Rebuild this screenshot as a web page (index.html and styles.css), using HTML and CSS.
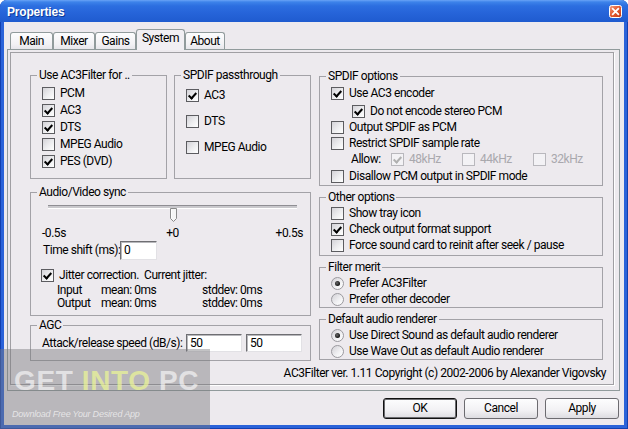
FILE: index.html
```html
<!DOCTYPE html>
<html>
<head>
<meta charset="utf-8">
<title>Properties</title>
<link rel="stylesheet" href="styles.css">
</head>
<body>
<div class="window">
  <div class="titlebar">
    <span class="title">Properties</span>
    <span class="close"><svg width="13" height="13" viewBox="0 0 13 13"><defs><linearGradient id="cg" x1="0" y1="0" x2="1" y2="1"><stop offset="0" stop-color="#f3a488"/><stop offset="0.45" stop-color="#e35d34"/><stop offset="1" stop-color="#c23812"/></linearGradient></defs><rect x="0.5" y="0.5" width="12" height="12" rx="2" fill="url(#cg)" stroke="#fff"/><path d="M3.8 3.8 L9.2 9.2 M9.2 3.8 L3.8 9.2" stroke="#fff" stroke-width="1.8" stroke-linecap="square"/></svg></span>
  </div>
  <div class="client">
    <div class="tabs">
      <div class="tab t-main">Main</div>
      <div class="tab t-mixer">Mixer</div>
      <div class="tab t-gains">Gains</div>
      <div class="tab t-system active">System</div>
      <div class="tab t-about">About</div>
    </div>
    <div class="panel">
      <div class="page">
        <div class="cols">
          <div class="col col-left">
            <div class="pair">
              <div class="group g-use">
                <div class="gtitle">Use AC3Filter for ..</div>
                <div class="list list-use">
                  <div class="opt"><span class="cb"></span><span>PCM</span></div>
                  <div class="opt"><span class="cb on"></span><span>AC3</span></div>
                  <div class="opt"><span class="cb on"></span><span>DTS</span></div>
                  <div class="opt"><span class="cb"></span><span>MPEG Audio</span></div>
                  <div class="opt"><span class="cb on"></span><span>PES (DVD)</span></div>
                </div>
              </div>
              <div class="group g-pass">
                <div class="gtitle">SPDIF passthrough</div>
                <div class="list list-pass">
                  <div class="opt"><span class="cb on"></span><span>AC3</span></div>
                  <div class="opt"><span class="cb"></span><span>DTS</span></div>
                  <div class="opt"><span class="cb"></span><span>MPEG Audio</span></div>
                </div>
              </div>
            </div>
            <div class="group g-av">
              <div class="gtitle">Audio/Video sync</div>
              <div class="slider">
                <div class="track"></div>
                <svg class="thumb" width="7" height="14" viewBox="0 0 7 14"><path d="M0.5 0.5H6.5V10.5L3.5 13.5L0.5 10.5Z" fill="#f6f6f6" stroke="#8a8a8a"/><path d="M1.5 1.5V10" stroke="#fff"/></svg>
              </div>
              <div class="scale"><span>-0.5s</span><span>+0</span><span class="r">+0.5s</span></div>
              <div class="shift"><span class="shift-label">Time shift (ms):</span><div class="tb tb-shift">0</div></div>
              <div class="opt jitter"><span class="cb on"></span><span>Jitter correction.&nbsp; Current jitter:</span></div>
              <div class="stats">
                <span>Input</span><span>mean: 0ms</span><span>stddev: 0ms</span>
                <span>Output</span><span>mean: 0ms</span><span>stddev: 0ms</span>
              </div>
            </div>
            <div class="group g-agc">
              <div class="gtitle">AGC</div>
              <div class="agc-row"><span class="agc-label">Attack/release speed (dB/s):</span><div class="tb tb-agc">50</div><div class="tb tb-agc">50</div></div>
            </div>
          </div>
          <div class="col col-right">
            <div class="group g-spdif">
              <div class="gtitle">SPDIF options</div>
              <div class="list list-spdif">
                <div class="opt"><span class="cb on"></span><span>Use AC3 encoder</span></div>
                <div class="opt sub"><span class="cb on"></span><span>Do not encode stereo PCM</span></div>
                <div class="opt"><span class="cb"></span><span>Output SPDIF as PCM</span></div>
                <div class="opt"><span class="cb"></span><span>Restrict SPDIF sample rate</span></div>
                <div class="allow">
                  <span>Allow:</span>
                  <div class="opt dis"><span class="cb dis on"></span><span>48kHz</span></div>
                  <div class="opt dis"><span class="cb dis"></span><span>44kHz</span></div>
                  <div class="opt dis"><span class="cb dis"></span><span>32kHz</span></div>
                </div>
                <div class="opt last"><span class="cb"></span><span>Disallow PCM output in SPDIF mode</span></div>
              </div>
            </div>
            <div class="group g-other">
              <div class="gtitle">Other options</div>
              <div class="list list-small">
                <div class="opt"><span class="cb"></span><span>Show tray icon</span></div>
                <div class="opt"><span class="cb on"></span><span>Check output format support</span></div>
                <div class="opt"><span class="cb"></span><span>Force sound card to reinit after seek / pause</span></div>
              </div>
            </div>
            <div class="group g-merit">
              <div class="gtitle">Filter merit</div>
              <div class="list list-small">
                <div class="opt"><span class="rb on"></span><span>Prefer AC3Filter</span></div>
                <div class="opt"><span class="rb"></span><span>Prefer other decoder</span></div>
              </div>
            </div>
            <div class="group g-rend">
              <div class="gtitle">Default audio renderer</div>
              <div class="list list-small">
                <div class="opt"><span class="rb on"></span><span>Use Direct Sound as default audio renderer</span></div>
                <div class="opt"><span class="rb"></span><span>Use Wave Out as default Audio renderer</span></div>
              </div>
            </div>
          </div>
        </div>
        <div class="copyright">AC3Filter ver. 1.11 Copyright (c) 2002-2006 by Alexander Vigovsky</div>
      </div>
    </div>
    <div class="buttons">
      <div class="btn default">OK</div>
      <div class="btn">Cancel</div>
      <div class="btn">Apply</div>
    </div>
  </div>
  <div class="watermark">
    <div class="wm-title">GET <span class="wm-into">INTO</span> PC</div>
    <div class="wm-sub">Download Free Your Desired App</div>
  </div>
</div>
</body>
</html>
```
FILE: styles.css
```css
* { box-sizing: border-box; }
html, body { margin: 0; padding: 0; }
body {
  width: 628px;
  height: 429px;
  overflow: hidden;
  background: #fff;
  color: #000;
  font: 12px Roboto, "Liberation Sans", Arial, sans-serif;
  letter-spacing: -0.45px;
}
.window {
  position: relative;
  width: 628px;
  height: 429px;
  display: flex;
  flex-direction: column;
  background: #2b63d9;
  border-radius: 7px 7px 0 0;
  overflow: hidden;
  box-shadow: inset 1px 0 0 #1340b0, inset -1px 0 0 #1340b0, inset 0 -1px 0 #1340b0;
}
.titlebar {
  height: 22px;
  flex: none;
  display: flex;
  align-items: center;
  justify-content: space-between;
  padding: 0 6px 0 7px;
  background: linear-gradient(#6aa4f6 0, #3d83ea 2px, #2c6ee0 6px, #2664d9 13px, #1f5bcf 22px);
}
.title {
  margin-top: 2px;
  font: bold 12px "Liberation Sans", Arial, sans-serif;
  letter-spacing: -0.2px;
  color: #fff;
  text-shadow: 1px 1px 0 #0d3a98;
}
.close { display: flex; margin-top: 1px; }
.client {
  flex: 1;
  margin: 0 4px 4px 4px;
  padding: 7px 4px 0 3px;
  background: #edeaee;
  display: flex;
  flex-direction: column;
}
.tabs {
  height: 20px;
  display: flex;
  align-items: flex-end;
  padding-left: 3px;
}
.tab {
  height: 17px;
  display: flex;
  align-items: center;
  justify-content: center;
  border: 1px solid #919b9c;
  border-bottom: none;
  border-radius: 3px 3px 0 0;
  background: linear-gradient(#fdfdfe, #f2f1f4 70%, #e7e6eb);
  line-height: 13px;
}
.t-main { width: 43px; }
.t-mixer { width: 42px; }
.t-gains { width: 41px; }
.t-system { width: 49px; }
.t-about { width: 40px; }
.tab.active {
  height: 21px;
  margin-bottom: -1px;
  position: relative;
  z-index: 1;
  background: #f1eff3;
  padding-bottom: 3px;
}
.panel {
  height: 342px;
  flex: none;
  border: 1px solid #919b9c;
  background: #edeaee;
  padding: 2px 5px 5px 2px;
}
.page {
  height: 100%;
  border: 1px solid #a09fa3;
  box-shadow: 1px 1px 0 #fff;
  padding: 16px 10px 0 19px;
}
.cols { display: flex; gap: 8px; }
.col { display: flex; flex-direction: column; }
.col-left { width: 281px; }
.col-right { width: 284px; padding-top: 1px; }
.pair { display: flex; gap: 7px; }
.group {
  border: 1px solid #a3a2a7;
  margin-top: 6px;
  padding: 0 10px 0 11px;
}
.gtitle {
  width: fit-content;
  height: 13px;
  line-height: 13px;
  margin: -7px 0 0 -5px;
  padding: 0 2px;
  background: #edeaee;
  white-space: nowrap;
}
.g-use, .g-pass { width: 137px; height: 104px; }
.g-av { height: 124px; margin-top: 13px; }
.g-agc { height: 36px; margin-top: 9px; padding-right: 4px; }
.g-spdif { height: 110px; }
.g-other { height: 59px; margin-top: 11px; }
.g-merit, .g-rend { height: 41px; margin-top: 11px; }

.opt {
  display: flex;
  align-items: center;
  gap: 5px;
  height: 16px;
  white-space: nowrap;
  line-height: 13px;
}
.list-use { padding-top: 3px; }
.list-use .opt { height: 17px; }
.list-pass .opt { height: 26px; }
.list-spdif { padding-top: 2px; }
.list-spdif .sub { margin-top: 2px; padding-left: 21px; }
.list-spdif .last { margin-top: 1px; }
.list-small { padding-top: 1px; }

.cb {
  flex: none;
  position: relative;
  width: 13px;
  height: 13px;
  border: 1px solid #5c5c60;
  background: linear-gradient(135deg, #d4d3d8 0%, #eeeef0 55%, #fff 100%);
}
.cb.on::after {
  content: "";
  position: absolute;
  left: 3px;
  top: 1px;
  width: 3px;
  height: 6px;
  border: solid #000;
  border-width: 0 2px 2px 0;
  transform: rotate(42deg);
}
.cb.dis { border-color: #b9b8bd; background: #f3f2f5; }
.cb.dis.on::after { border-color: #b0b0b0; }
.dis { color: #a9a8ad; }

.rb {
  flex: none;
  position: relative;
  width: 13px;
  height: 13px;
  border-radius: 50%;
  border: 1px solid #9a999e;
  background: linear-gradient(135deg, #d2d1d6 0%, #f2f2f4 60%, #fff 100%);
}
.rb.on::after {
  content: "";
  position: absolute;
  left: 3px;
  top: 3px;
  width: 5px;
  height: 5px;
  border-radius: 50%;
  background: radial-gradient(circle at 40% 40%, #6a6a6a, #111 70%);
}

.allow {
  display: grid;
  grid-template-columns: 40px 71px 71px auto;
  align-items: center;
  height: 16px;
  padding-left: 20px;
  line-height: 13px;
}

.tb {
  flex: none;
  display: flex;
  align-items: center;
  background: #fff;
  border: 1px solid;
  border-color: #6e6e72 #e2e1e5 #e2e1e5 #6e6e72;
  box-shadow: inset 1px 1px 0 #b8b8bc;
  padding: 0 3px;
  line-height: 13px;
}

.slider {
  position: relative;
  height: 17px;
  margin: 1px 3px 0 6px;
}
.track {
  margin-top: 6px;
  height: 4px;
  border-top: 1px solid #8f8e93;
  border-bottom: 1px solid #fff;
  background: #c9c8cc;
}
.thumb {
  position: absolute;
  left: calc(50% - 3px);
  top: 3px;
}
.scale {
  display: grid;
  grid-template-columns: 1fr auto 1fr;
  margin: 5px -3px 0 0;
  line-height: 13px;
}
.scale .r { text-align: right; }
.shift { display: flex; align-items: center; margin-top: 1px; }
.shift-label { flex: none; width: 77px; margin-left: 1px; line-height: 13px; white-space: nowrap; }
.tb-shift { width: 37px; height: 19px; }
.jitter { height: 13px; margin-top: 9px; margin-left: -1px; }
.stats {
  display: grid;
  grid-template-columns: 44px 101px auto;
  padding-left: 15px;
  margin-top: 2px;
  line-height: 13px;
  white-space: nowrap;
}
.agc-row { display: flex; align-items: center; gap: 4px; margin-top: 2px; }
.agc-label { flex: none; width: 140px; line-height: 13px; white-space: nowrap; }
.tb-agc { width: 56px; height: 18px; }

.copyright {
  margin: 6px -3px 0 0;
  text-align: right;
  line-height: 13px;
  white-space: nowrap;
}

.buttons {
  display: flex;
  justify-content: flex-end;
  gap: 7px;
  margin-top: 7px;
  padding-right: 1px;
}
.btn {
  width: 74px;
  height: 21px;
  display: flex;
  align-items: center;
  justify-content: center;
  border: 1px solid #6c6b70;
  border-radius: 3px;
  background: linear-gradient(#fdfdfe, #f2f1f4 60%, #dddce1);
  line-height: 13px;
}
.btn.default { border-color: #111; box-shadow: inset 0 0 0 1px #6a6a6e; }

.watermark {
  position: absolute;
  left: 0;
  top: 349px;
  width: 210px;
  height: 80px;
  background: rgba(118, 118, 122, 0.44);
}
.wm-title {
  margin: 18px 0 0 14px;
  font: bold 28px/28px "Liberation Sans", Arial, sans-serif;
  letter-spacing: 0.6px;
  color: rgba(255, 255, 255, 0.6);
  white-space: nowrap;
}
.wm-into { color: rgba(236, 246, 150, 0.72); }
.wm-sub {
  margin: 13px 0 0 12px;
  font: italic 9px/12px "Liberation Sans", Arial, sans-serif;
  letter-spacing: -0.2px;
  color: rgba(255, 255, 255, 0.65);
  white-space: nowrap;
}
```
